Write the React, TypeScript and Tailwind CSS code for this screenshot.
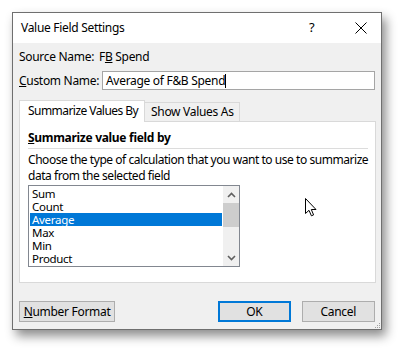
import React from 'react';

const items = ['Sum', 'Count', 'Average', 'Max', 'Min', 'Product'];

function Chevron({ up }: { up?: boolean }) {
  return (
    <svg width="9" height="6" viewBox="0 0 9 6">
      <path d={up ? 'M1 5 L4.5 1.5 L8 5' : 'M1 1 L4.5 4.5 L8 1'} fill="none" stroke="#606060" strokeWidth="1.6" />
    </svg>
  );
}

export default function App() {
  return (
    <div className="relative w-[402px] h-[351px] bg-white overflow-hidden pt-[12px] pl-[12px]" style={{ fontFamily: '"Noto Sans", sans-serif' }}>
      <div className="relative w-[370px] h-[318px] border border-[#6f6f6f] bg-[#f0f0f0] shadow-[4px_6px_10px_rgba(0,0,0,0.45)] flex flex-col text-[12px] tracking-[-0.3px] text-black whitespace-nowrap">
        {/* title bar */}
        <div className="h-[30px] bg-white flex items-center pl-[8px]">
          <span className="flex-1">Value Field Settings</span>
          <span className="w-[10px] text-[13px] mr-[36px]">?</span>
          <svg width="12" height="12" viewBox="0 0 12 12" className="mr-[14px]">
            <path d="M0.5 0.5 L11.5 11.5 M11.5 0.5 L0.5 11.5" stroke="#000" strokeWidth="1" />
          </svg>
        </div>

        <div className="flex flex-col px-[6px]">
          <div className="flex items-center h-[16px] mt-[6px] leading-[16px]">
            <span className="w-[80px] flex-none">Source Name:</span>
            <span>F<u>B</u> Spend</span>
          </div>
          <div className="flex items-center mt-[6px]">
            <span className="w-[83px] flex-none"><u>C</u>ustom Name:</span>
            <div className="w-[276px] h-[19px] bg-white border border-[#a5a5a5] flex items-center pl-[3px]">
              Average of F&amp;B Spend<span className="inline-block w-px h-[14px] bg-black" />
            </div>
          </div>

          {/* tabs */}
          <div className="flex items-end mt-[9px] h-[22px]">
            <div className="h-[22px] w-[126px] bg-white border border-b-0 border-[#d9d9d9] flex items-center pl-[8px] tracking-[-0.55px] relative z-10 -mb-px pb-px">
              Summarize Values By
            </div>
            <div className="h-[19px] w-[95px] bg-[#f0f0f0] border border-l-0 border-b-0 border-[#d9d9d9] flex items-center pl-[6px]">
              Show Values As
            </div>
          </div>
          <div className="w-[357px] h-[162px] bg-white border border-[#d9d9d9] pl-[8px] pr-[1px] pt-[8px] whitespace-normal">
            <div className="font-bold leading-[16px]"><u>S</u>ummarize value field by</div>
            <div className="h-px bg-[#dcdcdc] mt-[2px] mr-[6px]" />
            <div className="leading-[16px] mt-[3px] tracking-[-0.45px]">
              Choose the type of calculation that you want to use to summarize data from the selected field
            </div>
            <div className="mt-[1px] w-[212px] h-[82px] border border-[#828790] flex pl-px pt-px">
              <div className="flex-1 flex flex-col">
                {items.map((it) => (
                  <div
                    key={it}
                    className={`h-[13px] leading-[13px] pl-[2px] text-[11.5px] ${it === 'Average' ? 'bg-[#0078d7] text-white' : ''}`}
                  >
                    {it}
                  </div>
                ))}
              </div>
              <div className="w-[16px] ml-px bg-[#f0f0f0] flex flex-col items-center -mt-px">
                <div className="h-[17px] flex items-center justify-center"><Chevron up /></div>
                <div className="w-[16px] h-[24px] bg-[#cdcdcd]" />
                <div className="flex-1" />
                <div className="h-[17px] flex items-center justify-center"><Chevron /></div>
              </div>
            </div>
          </div>

          {/* buttons */}
          <div className="flex mt-[18px]">
            <button className="w-[97px] h-[21px] bg-[#e1e1e1] border border-[#adadad]">
              <u>N</u>umber Format
            </button>
            <button className="ml-[103px] w-[73px] h-[21px] bg-[#e1e1e1] border-2 border-[#0078d7]">
              OK
            </button>
            <button className="ml-[11px] w-[74px] h-[21px] bg-[#e1e1e1] border border-[#adadad]">
              Cancel
            </button>
          </div>
        </div>

        {/* resize grip */}
        <svg width="8" height="8" viewBox="0 0 8 8" className="absolute right-0 bottom-0">
          <rect x="6" y="2" width="1" height="1" fill="#a0a0a0" />
          <rect x="4" y="4" width="1" height="1" fill="#a0a0a0" />
          <rect x="6" y="4" width="1" height="1" fill="#a0a0a0" />
          <rect x="2" y="6" width="1" height="1" fill="#a0a0a0" />
          <rect x="4" y="6" width="1" height="1" fill="#a0a0a0" />
          <rect x="6" y="6" width="1" height="1" fill="#a0a0a0" />
        </svg>
      </div>

      {/* mouse pointer */}
      <svg width="13" height="20" viewBox="0 0 13 20" className="absolute left-[305px] top-[198px]">
        <path d="M0.5 0.5 L0.5 15.5 L4 12.3 L6.4 17.8 L8.6 16.9 L6.3 11.5 L11 11.5 Z" fill="#fff" stroke="#000" strokeWidth="1" strokeLinejoin="round" />
      </svg>
    </div>
  );
}
